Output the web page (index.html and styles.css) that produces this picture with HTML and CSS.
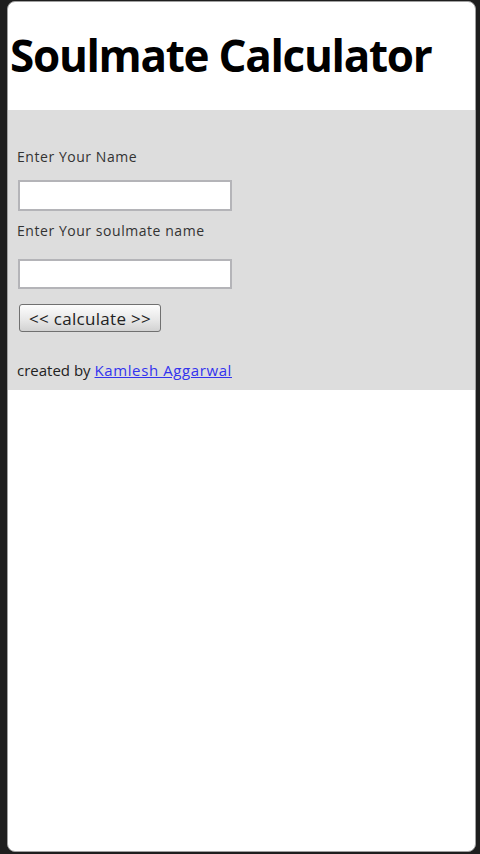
FILE: index.html
```html
<!DOCTYPE html>
<html>
<head>
<meta charset="utf-8">
<title>Soulmate Calculator</title>
<link rel="stylesheet" href="styles.css">
</head>
<body>
<div class="frame">
  <h1 class="title">Soulmate Calculator</h1>
  <div class="panel">
    <div class="label first">Enter Your Name</div>
    <input class="field" type="text">
    <div class="label second">Enter Your soulmate name</div>
    <input class="field field2" type="text">
    <button class="calc" type="button">&lt;&lt; calculate &gt;&gt;</button>
    <div class="credit">created by <a class="author" href="#">Kamlesh Aggarwal</a></div>
  </div>
</div>
</body>
</html>
```
FILE: styles.css
```css
html, body {
  margin: 0;
  padding: 0;
  height: 854px;
  background: #1e1e1e;
  overflow: hidden;
}
.frame {
  box-sizing: border-box;
  margin: 1px 4px 0 7px;
  height: 851px;
  border: 1px solid #a0a0a0;
  border-radius: 8px;
  background: #ffffff;
  overflow: hidden;
  font-family: "Open Sans", "Liberation Sans", sans-serif;
}
.title {
  margin: 0;
  height: 108px;
  box-sizing: border-box;
  padding: 26px 0 0 2px;
  font-size: 44px;
  line-height: 54px;
  font-weight: 680;
  letter-spacing: -1.3px;
  color: #000;
  white-space: nowrap;
}
.panel {
  background: #dddddd;
  height: 280px;
  box-sizing: border-box;
  padding: 39px 0 0 9px;
  display: flex;
  flex-direction: column;
  align-items: flex-start;
}
.label {
  font-size: 14px;
  line-height: 16px;
  letter-spacing: 0.55px;
  color: #333;
}
.second {
  margin-top: 12px;
}
.field {
  box-sizing: border-box;
  margin: 15px 0 0 1px;
  width: 214px;
  height: 31px;
  border: 2px solid #b4b4b8;
  background: #fff;
  padding: 0;
}
.field2 {
  margin-top: 20px;
  height: 30px;
}
.calc {
  margin: 15px 0 0 2px;
  box-sizing: border-box;
  width: 142px;
  height: 28px;
  padding: 0;
  border: 1px solid #707070;
  border-radius: 3px;
  background: linear-gradient(#fdfdfd, #e6e6e6 60%, #d2d2d2);
  font-family: "Open Sans", "Liberation Sans", sans-serif;
  font-size: 17px;
  letter-spacing: 0.3px;
  color: #222;
}
.credit {
  margin-top: 30px;
  font-size: 15px;
  line-height: 16px;
  color: #222;
}
.author {
  color: #3333ee;
  letter-spacing: 0.6px;
  text-decoration: underline;
}
```
